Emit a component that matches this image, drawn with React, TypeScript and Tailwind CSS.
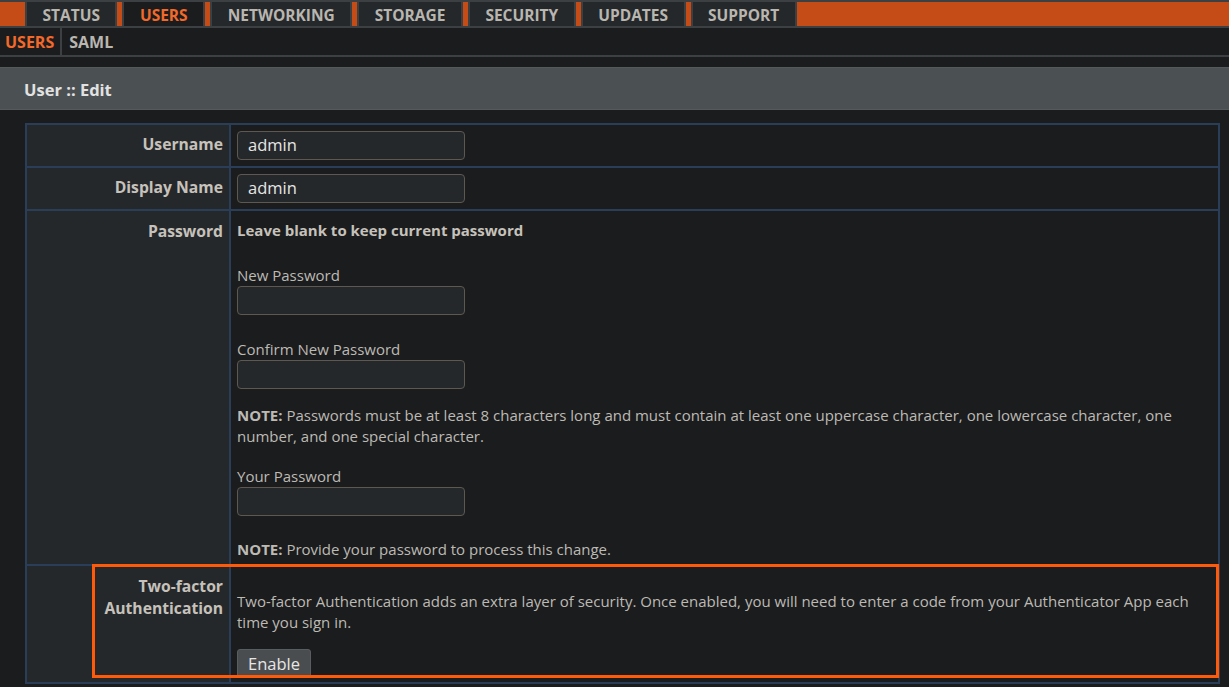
import React from "react";

const tabs = ["STATUS", "USERS", "NETWORKING", "STORAGE", "SECURITY", "UPDATES", "SUPPORT"];

function Input({ value }: { value?: string }) {
  return (
    <div className="w-[228px] h-[29px] rounded-[4px] border border-[#5e5850] bg-[#25282b] pl-[10px] flex items-center text-[16.5px] text-[#e6e6e6]">
      {value}
    </div>
  );
}

export default function App() {
  return (
    <div className="min-h-[687px] w-full bg-[#1b1c1e] font-['Open_Sans',sans-serif] text-[15px] text-[#bdbab4]">
      {/* Top nav */}
      <div className="h-[28px] bg-[#c54b17] border-t-2 border-b-2 border-[#3d4043] flex pl-[25px] gap-[5px]">
        {tabs.map((t) => (
          <div
            key={t}
            className={
              t === "USERS"
                ? "h-full px-[15.5px] pt-[4px] border-x-2 border-[#3d4043] bg-[#1b1c1e] text-[#f2692a] font-bold text-[15.5px] flex items-center"
                : "h-full px-[15.5px] pt-[4px] border-x-2 border-[#3d4043] bg-[#25282b] text-[#b9b6b0] font-bold text-[15.5px] flex items-center"
            }
          >
            {t}
          </div>
        ))}
      </div>
      {/* Sub nav */}
      <div className="h-[29px] border-b-2 border-[#3d4043] flex items-stretch font-bold text-[16px]">
        <div className="pl-[5px] pr-[6px] pt-[1px] flex items-center text-[#f2692a]">USERS</div>
        <div className="w-[2px] bg-[#3d4043]"></div>
        <div className="pl-[7px] pt-[1px] flex items-center text-[#b9b6b0]">SAML</div>
      </div>
      {/* Panel header */}
      <div className="mt-[10px] h-[43px] bg-[#4b5053] border-t border-[#2e3133] border-b border-[#55595c] pl-[24px] pt-[3px] flex items-center font-bold text-[16.5px] text-[#e2e2e2]">
        User :: Edit
      </div>
      {/* Table */}
      <div className="mt-[13px] ml-[25px] mr-[9px] border-2 border-[#2a3e5a]">
        <div className="flex border-b-2 border-[#2a3e5a]">
          <div className="w-[204px] shrink-0 bg-[#25282b] border-r-2 border-[#2a3e5a] pt-[8px] pr-[6px] text-right font-bold text-[15.7px] text-[#c6c2bb]">
            Username
          </div>
          <div className="flex-1 pl-[6px] py-[6px]">
            <Input value="admin" />
          </div>
        </div>
        <div className="flex border-b-2 border-[#2a3e5a]">
          <div className="w-[204px] shrink-0 bg-[#25282b] border-r-2 border-[#2a3e5a] pt-[8px] pr-[6px] text-right font-bold text-[15.7px] text-[#c6c2bb]">
            Display Name
          </div>
          <div className="flex-1 pl-[6px] py-[6px]">
            <Input value="admin" />
          </div>
        </div>
        <div className="flex border-b-2 border-[#2a3e5a]">
          <div className="w-[204px] shrink-0 bg-[#25282b] border-r-2 border-[#2a3e5a] pt-[9px] pr-[6px] text-right font-bold text-[15.7px] text-[#c6c2bb]">
            Password
          </div>
          <div className="flex-1 pl-[6px] pt-[9px] pb-[5px] leading-[21px]">
            <div className="font-bold text-[#c6c2bb] leading-[20px]">Leave blank to keep current password</div>
            <div className="mt-[25px] leading-[20px]">New Password</div>
            <div className="mt-[1px]"><Input /></div>
            <div className="mt-[24px] leading-[20px]">Confirm New Password</div>
            <div className="mt-[1px]"><Input /></div>
            <div className="mt-[16px] pr-[30px]">
              <span className="font-bold">NOTE:</span> Passwords must be at least 8 characters long and must contain at least one uppercase character, one lowercase character, one number, and one special character.
            </div>
            <div className="mt-[19px] leading-[20px]">Your Password</div>
            <div className="mt-[1px]"><Input /></div>
            <div className="mt-[23px] leading-[20px]">
              <span className="font-bold">NOTE:</span> Provide your password to process this change.
            </div>
          </div>
        </div>
        <div className="flex relative">
          <div className="w-[204px] shrink-0 bg-[#25282b] border-r-2 border-[#2a3e5a] pt-[9px] pr-[6px] text-right font-bold text-[15.7px] text-[#c6c2bb] leading-[22px]">
            Two-factor
            <br />
            Authentication
          </div>
          <div className="flex-1 pl-[6px] pt-[25px] pb-[4px] leading-[21px]">
            <div className="pr-[10px]">
              Two-factor Authentication adds an extra layer of security. Once enabled, you will need to enter a code from your Authenticator App each time you sign in.
            </div>
            <button className="mt-[16px] h-[29px] px-[10px] rounded-[3px] border border-[#5a5d60] bg-[#4a4d50] text-[16.5px] text-[#e6e6e6] flex items-center">
              Enable
            </button>
          </div>
          <div className="absolute left-[65px] -top-[2px] -right-[1px] bottom-[4px] border-[3px] border-[#ff5a0a] pointer-events-none"></div>
        </div>
      </div>
    </div>
  );
}
